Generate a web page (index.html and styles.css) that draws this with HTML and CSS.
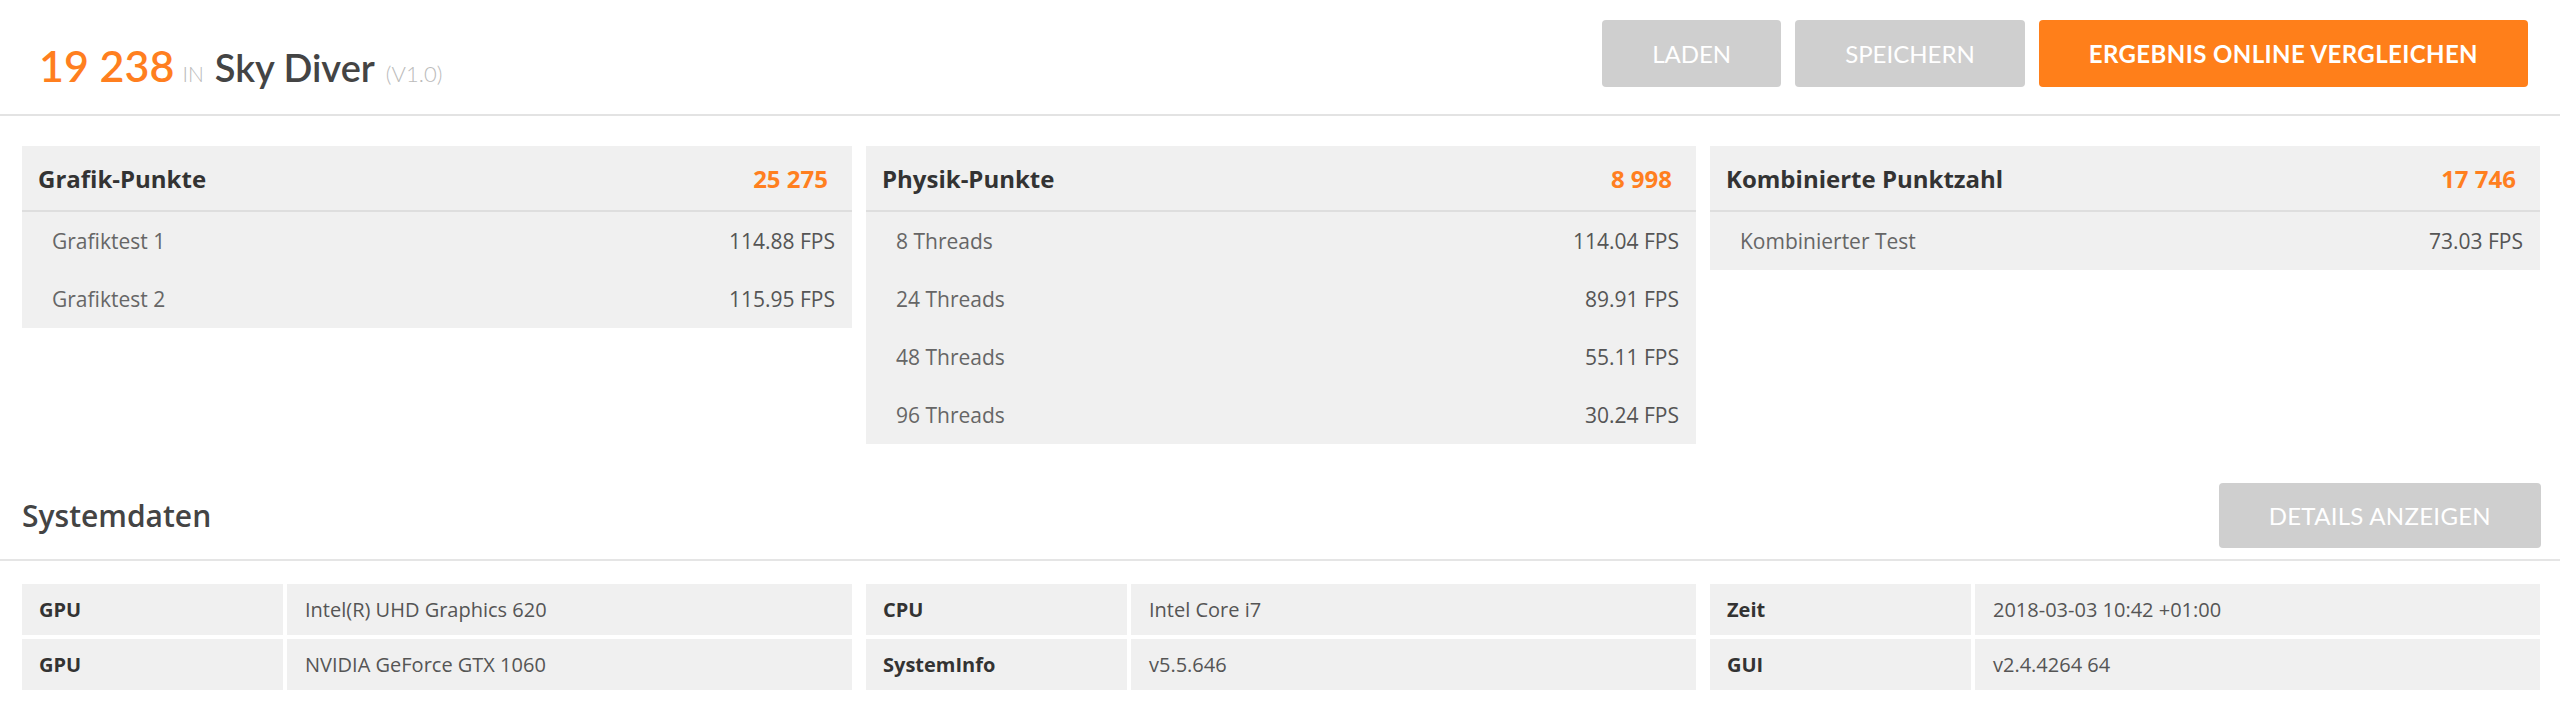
FILE: index.html
```html
<!DOCTYPE html>
<html lang="de">
<head>
    <meta charset="UTF-8">
    <meta name="viewport" content="width=device-width, initial-scale=1.0">
    <title>Sky Diver Ergebnis</title>
    <link rel="stylesheet" href="styles.css">
</head>
<body>

    <header class="result-header">
        <h1 class="result-title">
            <span class="score">19 238</span>
            <span class="in">in</span>
            <span class="test-name">Sky Diver</span>
            <span class="version">(V1.0)</span>
        </h1>
        <div class="actions">
            <button type="button" class="btn">LADEN</button>
            <button type="button" class="btn">SPEICHERN</button>
            <button type="button" class="btn btn-primary">ERGEBNIS ONLINE VERGLEICHEN</button>
        </div>
    </header>

    <section class="scores">
        <div class="panel">
            <div class="panel-head">
                <span>Grafik-Punkte</span>
                <span class="panel-score">25 275</span>
            </div>
            <div class="panel-row"><span>Grafiktest 1</span><span class="fps">114.88 FPS</span></div>
            <div class="panel-row"><span>Grafiktest 2</span><span class="fps">115.95 FPS</span></div>
        </div>

        <div class="panel">
            <div class="panel-head">
                <span>Physik-Punkte</span>
                <span class="panel-score">8 998</span>
            </div>
            <div class="panel-row"><span>8 Threads</span><span class="fps">114.04 FPS</span></div>
            <div class="panel-row"><span>24 Threads</span><span class="fps">89.91 FPS</span></div>
            <div class="panel-row"><span>48 Threads</span><span class="fps">55.11 FPS</span></div>
            <div class="panel-row"><span>96 Threads</span><span class="fps">30.24 FPS</span></div>
        </div>

        <div class="panel">
            <div class="panel-head">
                <span>Kombinierte Punktzahl</span>
                <span class="panel-score">17 746</span>
            </div>
            <div class="panel-row"><span>Kombinierter Test</span><span class="fps">73.03 FPS</span></div>
        </div>
    </section>

    <div class="system-head">
        <h2>Systemdaten</h2>
        <button type="button" class="btn btn-details">DETAILS ANZEIGEN</button>
    </div>

    <section class="system">
        <div class="info">
            <div class="info-label">GPU</div>
            <div class="info-value">Intel(R) UHD Graphics 620</div>
            <div class="info-label">GPU</div>
            <div class="info-value">NVIDIA GeForce GTX 1060</div>
        </div>
        <div class="info">
            <div class="info-label">CPU</div>
            <div class="info-value">Intel Core i7</div>
            <div class="info-label">SystemInfo</div>
            <div class="info-value">v5.5.646</div>
        </div>
        <div class="info">
            <div class="info-label">Zeit</div>
            <div class="info-value">2018-03-03 10:42 +01:00</div>
            <div class="info-label">GUI</div>
            <div class="info-value">v2.4.4264 64</div>
        </div>
    </section>

</body>
</html>
```

FILE: styles.css
```css
body {
    margin: 0;
    padding: 0;
    background-color: #fff;
    font-family: 'Open Sans', 'Noto Sans', sans-serif;
    color: #555;
}

/* Top bar with the total score */
.result-header {
    display: flex;
    justify-content: space-between;
    align-items: flex-start;
    height: 116px;
    box-sizing: border-box;
    padding: 20px 32px 0 39px;
    border-bottom: 2px solid #e3e3e3;
}

.result-title {
    display: flex;
    align-items: baseline;
    margin: 24px 0 0 0;
    font-family: 'Lato', sans-serif;
    line-height: 1;
    font-weight: 400;
}

.score {
    font-size: 43px;
    font-weight: 600;
    color: #ff7f1f;
    margin-right: 8px;
}

.in {
    font-size: 21px;
    font-weight: 300;
    text-transform: uppercase;
    color: #bbb;
    margin-right: 11px;
}

.test-name {
    font-size: 38px;
    font-weight: 600;
    color: #444;
    margin-right: 11px;
}

.version {
    font-size: 22px;
    font-weight: 300;
    color: #bbb;
}

.actions {
    display: flex;
    gap: 14px;
}

.btn {
    height: 67px;
    padding: 0 50px;
    border: none;
    border-radius: 4px;
    background-color: #cfcfcf;
    color: #fff;
    font-family: 'Lato', sans-serif;
    font-size: 24px;
    font-weight: 400;
    cursor: pointer;
}

.btn-primary {
    background-color: #ff7f1a;
    font-weight: 700;
    letter-spacing: 0.4px;
}

/* Score panels */
.scores {
    display: grid;
    grid-template-columns: repeat(3, 1fr);
    gap: 14px;
    align-items: start;
    padding: 30px 20px 0 22px;
}

.panel {
    background-color: #f0f0f0;
}

.panel-head {
    display: flex;
    justify-content: space-between;
    align-items: center;
    height: 66px;
    box-sizing: border-box;
    padding: 0 24px 0 16px;
    border-bottom: 2px solid #dedede;
    font-size: 24px;
    font-weight: 700;
    color: #333;
}

.panel-score {
    color: #ff7f1f;
}

.panel-row {
    display: flex;
    justify-content: space-between;
    align-items: center;
    height: 58px;
    padding: 0 17px 0 30px;
    font-size: 21px;
    color: #666;
}

.panel-row .fps {
    color: #555;
}

/* System info */
.system-head {
    display: flex;
    justify-content: space-between;
    align-items: center;
    margin-top: 39px;
    padding: 0 19px 11px 22px;
    border-bottom: 2px solid #e5e5e5;
}

.system-head h2 {
    margin: 0;
    font-size: 30px;
    font-weight: 600;
    color: #444;
}

.btn-details {
    height: 65px;
    letter-spacing: 0.3px;
}

.system {
    display: grid;
    grid-template-columns: repeat(3, 1fr);
    gap: 14px;
    padding: 23px 20px 0 22px;
}

.info {
    display: grid;
    grid-template-columns: 261px 1fr;
    gap: 4px;
}

.info-label,
.info-value {
    display: flex;
    align-items: center;
    height: 51px;
    background-color: #f0f0f0;
    font-size: 20px;
}

.info-label {
    padding-left: 17px;
    font-weight: 700;
    color: #333;
}

.info-value {
    padding-left: 18px;
    color: #555;
}
```
